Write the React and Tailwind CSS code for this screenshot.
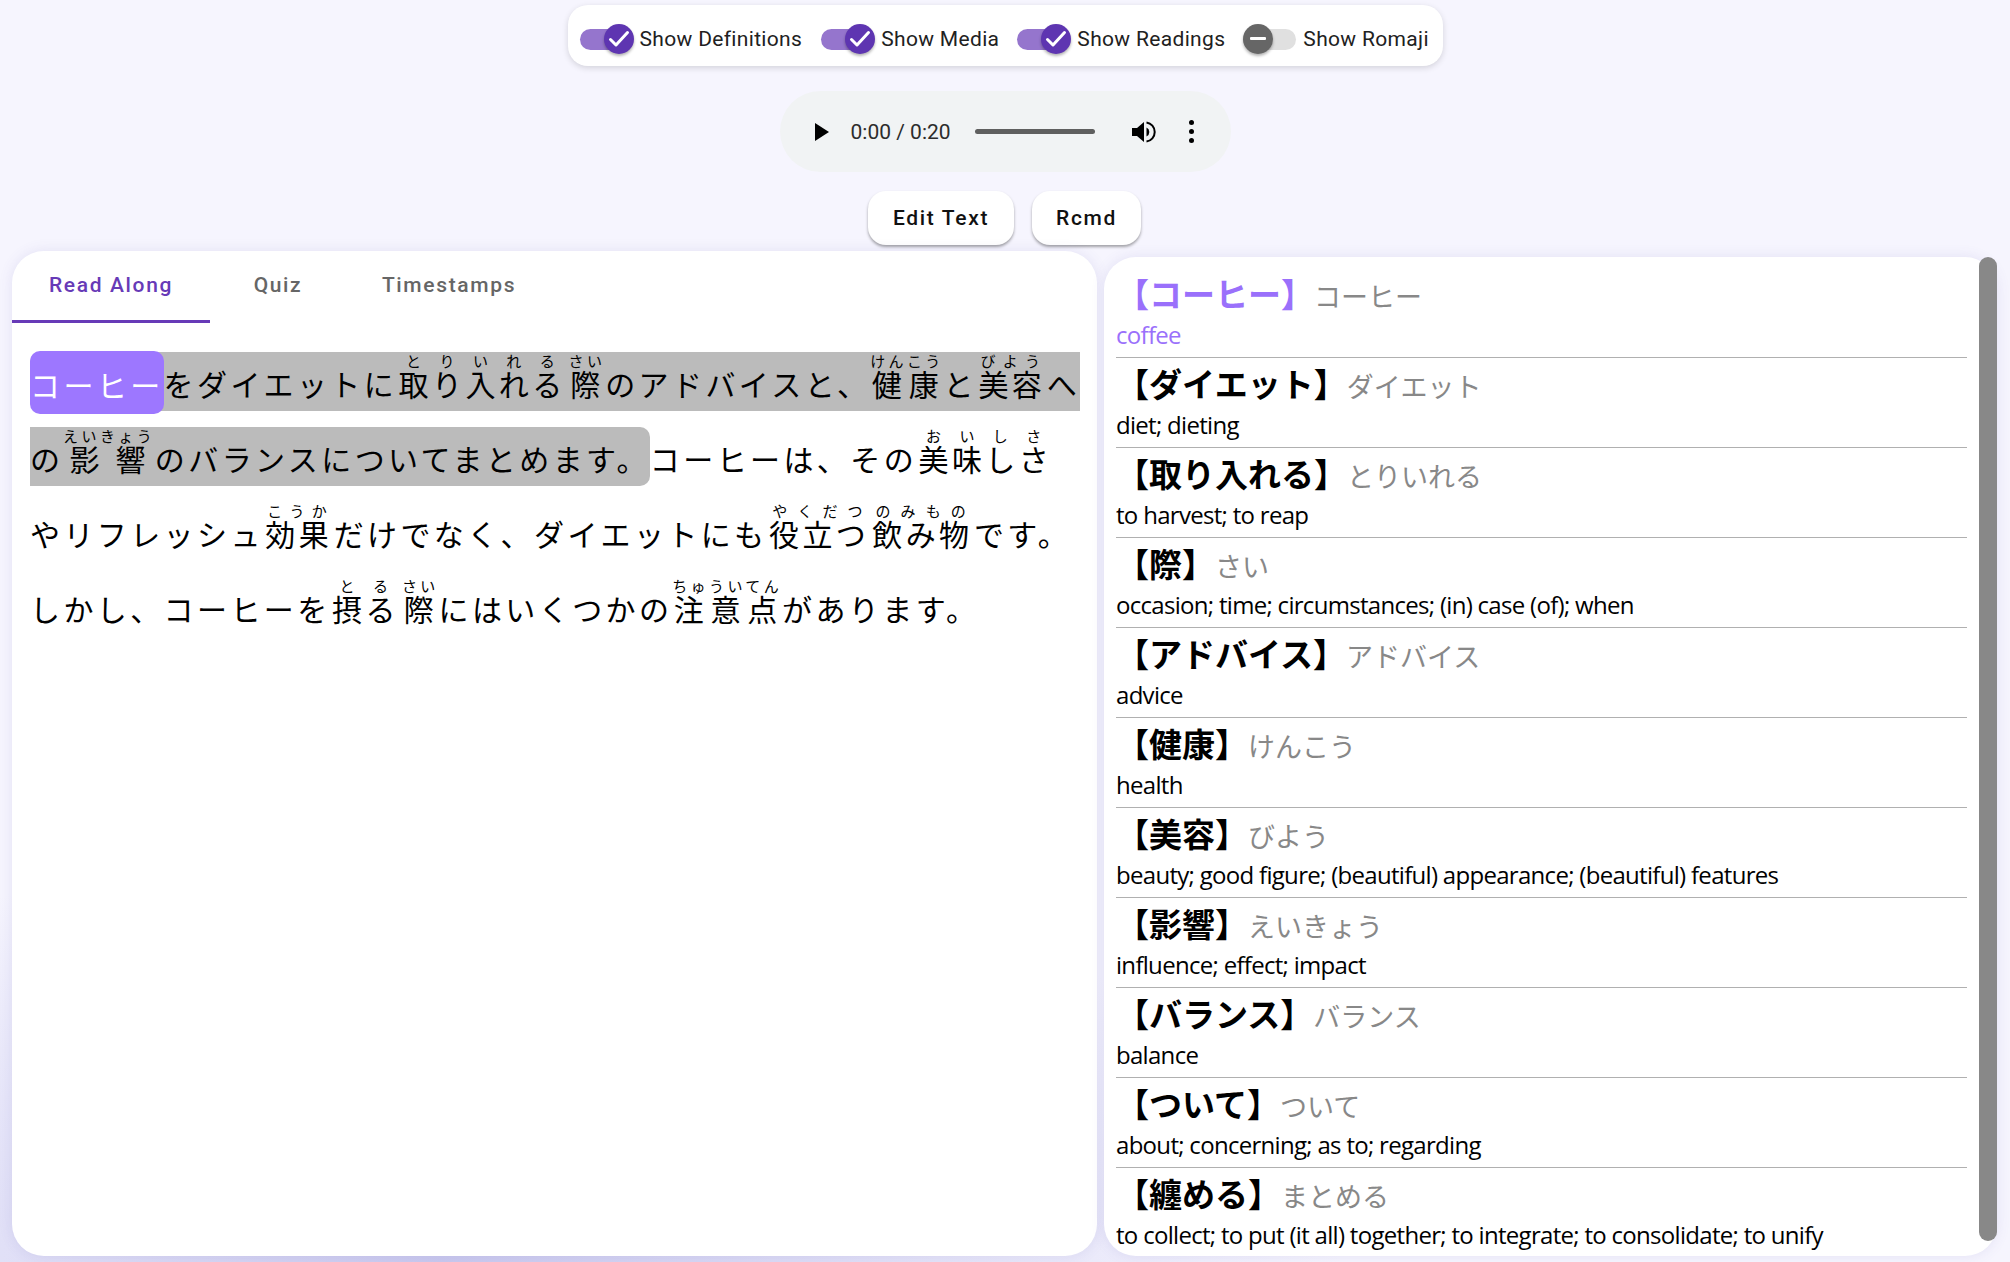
import React from 'react';

const jp = { fontFamily: '"Noto Sans CJK JP", sans-serif' };

const entries = [
  { word: 'コーヒー', reading: 'コーヒー', meaning: 'coffee', active: true },
  { word: 'ダイエット', reading: 'ダイエット', meaning: 'diet; dieting' },
  { word: '取り入れる', reading: 'とりいれる', meaning: 'to harvest; to reap' },
  { word: '際', reading: 'さい', meaning: 'occasion; time; circumstances; (in) case (of); when' },
  { word: 'アドバイス', reading: 'アドバイス', meaning: 'advice' },
  { word: '健康', reading: 'けんこう', meaning: 'health' },
  { word: '美容', reading: 'びよう', meaning: 'beauty; good figure; (beautiful) appearance; (beautiful) features' },
  { word: '影響', reading: 'えいきょう', meaning: 'influence; effect; impact' },
  { word: 'バランス', reading: 'バランス', meaning: 'balance' },
  { word: 'ついて', reading: 'ついて', meaning: 'about; concerning; as to; regarding' },
  { word: '纏める', reading: 'まとめる', meaning: 'to collect; to put (it all) together; to integrate; to consolidate; to unify' },
];

function R({ base, text, wide }) {
  return (
    <ruby className={wide ? 'mx-[6px]' : 'mx-[1.5px]'}>
      {base}
      <rt className="text-[15px] leading-[15px]">{text}</rt>
    </ruby>
  );
}

function Toggle({ label, on, className }) {
  return (
    <div className={`flex items-center ${className}`}>
      <div className={`relative w-[53px] h-[21px] rounded-full ${on ? 'bg-[#9575cd]' : 'bg-[#e0e0e0]'}`}>
        <div
          className={`absolute top-[-5px] w-[30px] h-[30px] rounded-full flex items-center justify-center shadow-[0_2px_3px_rgba(0,0,0,0.3)] ${on ? 'right-[-1px] bg-[#5e35b1]' : 'left-0 bg-[#666666]'}`}
        >
          {on ? (
            <svg width="24" height="24" viewBox="0 0 24 24" fill="none" stroke="white" strokeWidth="3" strokeLinecap="round" strokeLinejoin="round">
              <path d="M3.5 12.5l5.5 5.5L20.5 5.5" />
            </svg>
          ) : (
            <div className="w-[16px] h-[3px] rounded-[1px] bg-white" />
          )}
        </div>
      </div>
      <span className="ml-[7px] text-[21px] leading-none tracking-[0.33px] text-[#212121]">{label}</span>
    </div>
  );
}

function AudioBar() {
  return (
    <div className="w-[451px] h-[81px] rounded-full bg-[#f1f3f4] flex items-center">
      <svg className="ml-[35px]" width="14" height="18" viewBox="0 0 14 18">
        <path d="M0 0l14 9L0 18z" fill="#000" />
      </svg>
      <span className="ml-[22px] pt-[1px] text-[21px] leading-none text-[#2c2c2c]">0:00 / 0:20</span>
      <div className="ml-[24px] w-[120px] h-[5px] rounded-full bg-[#5f5f5f]" />
      <svg className="ml-[36px]" width="25" height="24" viewBox="0 0 25 24">
        <path d="M1 8h5l7-6v20l-7-6H1z" fill="#000" />
        <path d="M15.5 7.5a5 5 0 010 9z" fill="#000" />
        <path d="M15.5 2.5a9.6 9.6 0 010 19" fill="none" stroke="#000" strokeWidth="2" />
      </svg>
      <div className="ml-[33px] flex flex-col gap-[4px]">
        <div className="w-[5px] h-[5px] rounded-full bg-black" />
        <div className="w-[5px] h-[5px] rounded-full bg-black" />
        <div className="w-[5px] h-[5px] rounded-full bg-black" />
      </div>
    </div>
  );
}

function Entry({ entry }) {
  return (
    <div className="h-[90px] border-b border-[#b0b0b0]">
      <div className="flex items-baseline h-[52px]" style={jp}>
        <span className={`text-[33px] leading-[50px] font-bold ${entry.active ? 'text-[#9a70fb]' : 'text-black'}`}>
          【{entry.word}】
        </span>
        <span className="text-[27px] leading-[50px] text-[#888888]">{entry.reading}</span>
      </div>
      <div
        className={`text-[24px] leading-[30px] tracking-[-0.7px] whitespace-nowrap ${entry.active ? 'text-[#9a70fb]' : 'text-black'}`}
        style={{ fontFamily: '"Open Sans", sans-serif' }}
      >
        {entry.meaning}
      </div>
    </div>
  );
}

export default function App() {
  return (
    <div
      className="relative h-[1262px] overflow-hidden bg-[#f6f5fe] bg-[radial-gradient(ellipse_900px_420px_at_22%_100%,#c9c8ee_0%,#e4e3f8_55%,#f6f5fe_100%)] pt-[5px]"
      style={{ fontFamily: '"Roboto", sans-serif' }}
    >
      <div className="flex justify-center">
        <div className="w-[875px] h-[61px] bg-white rounded-[20px] shadow-[0_2px_6px_rgba(0,0,0,0.14)] flex items-center pl-[12px] pt-[7px]">
          <Toggle label="Show Definitions" on />
          <Toggle label="Show Media" on className="ml-[19px]" />
          <Toggle label="Show Readings" on className="ml-[18px]" />
          <Toggle label="Show Romaji" className="ml-[18px]" />
        </div>
      </div>

      <div className="flex justify-center mt-[25px]">
        <AudioBar />
      </div>

      <div className="flex justify-center gap-[18px] mt-[19px] pr-[1px]">
        <button className="w-[146px] h-[54px] pt-[1px] bg-white rounded-[18px] shadow-[0_2px_3px_rgba(0,0,0,0.35)] text-[21px] font-medium tracking-[1.65px] text-[#111111]">
          Edit Text
        </button>
        <button className="w-[109px] h-[54px] pt-[1px] bg-white rounded-[18px] shadow-[0_2px_3px_rgba(0,0,0,0.35)] text-[21px] font-medium tracking-[1.65px] text-[#111111]">
          Rcmd
        </button>
      </div>

      <div className="flex items-start mt-[6px] ml-[12px]">
        <div className="w-[1085px] h-[1005px] bg-white rounded-[32px] shadow-[0_0_14px_rgba(90,80,170,0.12)]">
          <div className="flex h-[72px] text-[21px] font-medium tracking-[1.65px]">
            <div className="w-[198px] flex items-center justify-center text-[#673ab7] border-b-[3px] border-[#673ab7]">Read Along</div>
            <div className="w-[136px] flex items-center justify-center text-[#666666] pb-[3px]">Quiz</div>
            <div className="w-[206px] flex items-center justify-center text-[#666666] pb-[3px]">Timestamps</div>
          </div>
          <div className="ml-[18px] pt-[23px] w-[1053px] text-[30px] leading-[75px] tracking-[3.4px] text-black" style={jp}>
            <span className="bg-[#bbbbbb] pt-[9px] pb-[6px] rounded-[10px]">
              <span className="bg-[#9d77ff] text-white pt-[10.5px] pb-[8.5px] rounded-[10px]">コーヒー</span>
              をダイエットに
              <R base="取り入れる" text="とりいれる" />
              <R base="際" text="さい" />
              のアドバイスと、
              <R base="健康" text="けんこう" />
              と
              <R base="美容" text="びよう" />
              への
              <R base="影響" text="えいきょう" wide />
              のバランスについてまとめます。
            </span>
            コーヒーは、その
            <R base="美味しさ" text="おいしさ" />
            やリフレッシュ
            <R base="効果" text="こうか" />
            だけでなく、ダイエットにも
            <R base="役立つ" text="やくだつ" />
            <R base="飲み物" text="のみもの" />
            です。しかし、コーヒーを
            <R base="摂る" text="とる" />
            <R base="際" text="さい" />
            にはいくつかの
            <R base="注意点" text="ちゅういてん" />
            があります。
          </div>
        </div>

        <div className="ml-[7px] mt-[6px] w-[893px] h-[999px] bg-white rounded-[32px] shadow-[0_0_14px_rgba(90,80,170,0.12)] flex">
          <div className="ml-[12px] w-[851px] h-full pt-[11px] overflow-hidden">
            {entries.map((entry) => (
              <Entry key={entry.word} entry={entry} />
            ))}
          </div>
          <div className="ml-[12px] w-[18px] h-[984px] rounded-[9px] bg-[#888888]" />
        </div>
      </div>
    </div>
  );
}
